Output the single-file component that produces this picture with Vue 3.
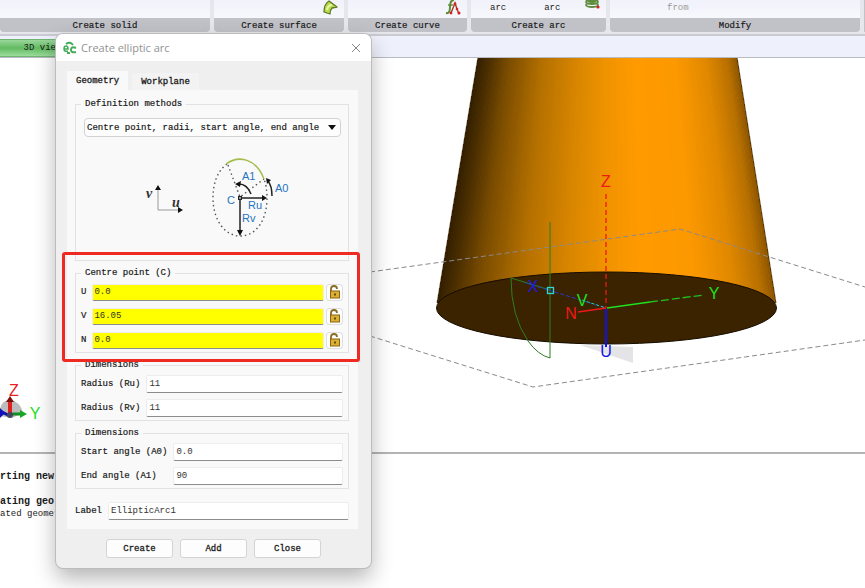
<template>
  <div class="page">
    <header class="ribbon">
      <section class="group">
        <div class="tools"></div>
        <h2>Create solid</h2>
      </section>
      <section class="group">
        <div class="tools end">
          <svg class="icon" width="16" height="18" viewBox="0 0 16 18">
            <path d="M2 12 Q2 4 7 1 L15 7 L10 8 Q8 10 8 14 Z" fill="#b9dc4a" stroke="#5d7a26" stroke-width="1.3" stroke-linejoin="round" />
            <path d="M5 10 Q6 5 10 5" fill="none" stroke="#e8f7a8" stroke-width="2" />
          </svg>
        </div>
        <h2>Create surface</h2>
      </section>
      <section class="group">
        <div class="tools end">
          <svg class="icon" width="16" height="18" viewBox="0 0 16 18">
            <path d="M1 13 Q5 14 5 7 Q5 0 9 0" fill="none" stroke="#5d8c3c" stroke-width="2" />
            <path d="M3 5 H8" stroke="#5d8c3c" stroke-width="1.4" />
            <path d="M6 13 L10 3 L12 9 L14 14" fill="none" stroke="#a83a2a" stroke-width="1.4" />
            <g fill="#d62020"><circle cx="6" cy="13" r="1.4" /><circle cx="10" cy="4" r="1.4" /><circle cx="12" cy="9" r="1.3" /><circle cx="14" cy="13" r="1.5" /></g>
          </svg>
        </div>
        <h2>Create curve</h2>
      </section>
      <section class="group">
        <div class="tools arcs">
          <span>arc</span>
          <span>arc</span>
          <svg class="icon" width="16" height="18" viewBox="0 0 16 18">
            <g fill="none" stroke="#5d8c3c" stroke-width="1.8">
              <path d="M2 0 Q8 3 14 0" />
              <ellipse cx="8" cy="2" rx="6" ry="2" />
              <ellipse cx="8" cy="5" rx="6" ry="2" />
            </g>
            <circle cx="14" cy="7" r="1.6" fill="#d62020" />
          </svg>
        </div>
        <h2>Create arc</h2>
      </section>
      <section class="group">
        <div class="tools faded"><span>from</span></div>
        <h2>Modify</h2>
      </section>
      <section class="group"></section>
    </header>

    <nav class="views">
      <button type="button" class="viewTab">3D view</button>
    </nav>

    <svg class="scene" viewBox="0 58 865 394">
      <!-- cone side, one quad per shade -->
      <g shape-rendering="crispEdges">
        <polygon v-for="s in strips" :key="s.points" :points="s.points" :fill="s.fill" />
      </g>
      <path d="M478 57 L437 303 M737 57 L776 303" stroke="#3a2400" stroke-width="1" fill="none" opacity=".7" />
      <path d="M580 345 L633 347 V363 Z" fill="#e4e4e6" />
      <ellipse cx="606.500" cy="308" rx="170" ry="36" fill="#3b2300" stroke="#150c00" />

      <g fill="none" stroke="#8a8a8a" stroke-dasharray="5 3">
        <path d="M370 272 L680 229 L865 287" />
        <path d="M370 336 L533 387 L865 340" />
      </g>

      <g fill="none" stroke-width="1">
        <path d="M550 222 V358 Q538 355 528 341 Q511 316 511 278" stroke="#2f7d22" />
        <path d="M511 278 L550 290" stroke="#2f7d22" />
        <path d="M526 283 L606 308" stroke="#1b3fd0" stroke-dasharray="4 2" />
        <path d="M582 300 L606 308" stroke="#35c8a0" stroke-dasharray="3 2" />
        <path d="M606 194 V308" stroke="#f01818" stroke-width="1.300" stroke-dasharray="5 3" />
        <path d="M578 312 L606 308" stroke="#f01818" stroke-width="1.300" />
        <path d="M607 308 L650 302" stroke="#20e020" stroke-width="1.300" />
        <path d="M650 302 L704 295" stroke="#20c020" stroke-dasharray="8 3" stroke-width="1.300" />
        <path d="M606 309 V347" stroke="#1010e8" stroke-width="2" />
        <rect x="547.500" y="287.500" width="6" height="6" stroke="#30d8d0" stroke-width="1.300" />
      </g>

      <g class="axis">
        <text x="606" y="187" fill="#f01818">Z</text>
        <text x="714" y="299" fill="#20e020">Y</text>
        <text x="533" y="292" fill="#1c1ce0">X</text>
        <text x="582" y="306" fill="#20e020">V</text>
        <text x="571" y="319" fill="#f01818">N</text>
        <text x="606" y="357" fill="#1010e8">U</text>
        <text x="14" y="396" fill="#e82020">Z</text>
        <text x="35" y="419" fill="#20e020">Y</text>
      </g>

      <!-- corner triad -->
      <path d="M0 409 Q2 400 10 400 Q20 401 23 413 L12 418 L0 416 Z" fill="#bcbcbc" />
      <path d="M10 416 L0 411" stroke="#1010b8" stroke-width="3" />
      <path d="M0 408 L5 413 L0 418 Z" fill="#1010b8" />
      <path d="M10 414 L22 414" stroke="#109020" stroke-width="3" />
      <path d="M20 410 L27 414 L20 418 Z" fill="#18a828" />
      <path d="M10 414 V400" stroke="#e02020" stroke-width="4" />
      <path d="M6 402 L10 396 L14 402 Z" fill="#7c1010" />
      <circle cx="10" cy="415" r="3" fill="#46465a" />
    </svg>

    <section class="console">
      <p class="strong">rting new</p>
      <p class="strong gap">ating geo</p>
      <p>ated geomet</p>
    </section>

    <form class="dialog" role="dialog" aria-labelledby="title" @submit.prevent>
      <div class="titleBar">
        <svg width="14" height="14" viewBox="0 0 14 14" fill="none" stroke="#45ab57" stroke-width="2">
          <path d="M3 3 Q7 0 10 4" />
          <path d="M1 8 H5 Q5 5 3 5 Q1 5 1 8 Q1 11 5 10" stroke-width="1.500" />
          <path d="M13 7 Q8 5 8 9 Q8 12 13 11" />
          <path d="M4 12 H7" />
        </svg>
        <h1 id="title">Create elliptic arc</h1>
        <button type="button" class="close" aria-label="Close window">
          <svg width="10" height="10" viewBox="0 0 10 10"><path d="M1 1 L9 9 M9 1 L1 9" stroke="#858585" /></svg>
        </button>
      </div>

      <div class="body">
        <div class="tabs">
          <button v-for="t in tabs" :key="t" type="button" :class="{ on: t === tab }" @click="tab = t">{{ t }}</button>
        </div>

        <div class="panel">
          <fieldset class="methods">
            <legend>Definition methods</legend>
            <div class="combo">
              <select v-model="method" aria-label="Definition methods">
                <option>Centre point, radii, start angle, end angle</option>
              </select>
            </div>
            <svg class="diagram" viewBox="81 137 260 123">
              <g stroke="#9a9a9a" fill="none"><path d="M158 189 V210 H179" /></g>
              <path d="M155 190 L158 185 L161 190 Z M178 207 L183 210 L178 213 Z" fill="#111" />
              <g class="uv">
                <text x="146" y="198">v</text>
                <text x="172" y="207">u</text>
              </g>
              <g fill="none">
                <path d="M227 164 C217 171 213 184 213 198 C213 220 225 236 240 236 C257 236 267 219 267 198 Q267 187 264 179" stroke="#555" stroke-width="1.400" stroke-dasharray="1.500 3" />
                <path d="M228 165 L240 197 L264 179" stroke="#555" stroke-width="1.400" stroke-dasharray="1.500 3" />
                <path d="M226 164 C240 154 257 160 264 179" stroke="#a3be4c" stroke-width="1.500" />
                <path d="M240 198 H263 M240 198 V231" stroke="#222" stroke-width="1.500" />
                <path d="M251 194 Q247 184 239 184" stroke="#222" stroke-width="1.500" />
                <path d="M272 196 Q272 186 268 181" stroke="#222" stroke-width="1.500" />
                <rect x="238.500" y="196.500" width="3" height="3" fill="#999" stroke="#222" />
              </g>
              <path d="M262 195 L267 198 L262 201 Z M237 230 L243 230 L240 236 Z M235 184 L241 181 L240 187 Z M266 178 L271 180 L267 184 Z" fill="#111" />
              <g class="names">
                <text x="242" y="180">A1</text>
                <text x="275" y="192">A0</text>
                <text x="227" y="204">C</text>
                <text x="248" y="209">Ru</text>
                <text x="242" y="222">Rv</text>
              </g>
            </svg>
          </fieldset>

          <fieldset class="rows marked">
            <legend>Centre point (C)</legend>
            <template v-for="c in centre" :key="c.name">
              <label :for="'c' + c.name">{{ c.name }}</label>
              <div class="locked">
                <input :id="'c' + c.name" v-model="c.value" type="text" class="yellow">
                <button type="button" class="lock" :aria-label="'Lock ' + c.name">
                  <svg width="12" height="14" viewBox="0 0 12 14">
                    <path d="M2 6 V4 Q2 1 5 1 Q8 1 8 4" fill="none" stroke="#8a6d24" stroke-width="1.800" />
                    <rect x="1.500" y="6" width="9" height="7" fill="#dcae33" stroke="#8a6516" />
                    <rect x="5" y="8.500" width="2" height="2" fill="#6e4a08" />
                  </svg>
                </button>
              </div>
            </template>
          </fieldset>

          <fieldset class="rows">
            <legend>Dimensions</legend>
            <template v-for="(r, i) in radii" :key="r.name">
              <label :for="'r' + i">{{ r.name }}</label>
              <input :id="'r' + i" v-model="r.value" type="text">
            </template>
          </fieldset>

          <fieldset class="rows">
            <legend>Dimensions</legend>
            <template v-for="(a, i) in angles" :key="a.name">
              <label :for="'a' + i">{{ a.name }}</label>
              <input :id="'a' + i" v-model="a.value" type="text">
            </template>
          </fieldset>

          <div class="rows labelRow">
            <label for="arcLabel">Label</label>
            <input id="arcLabel" v-model="arcLabel" type="text">
          </div>
        </div>

        <div class="actions">
          <button type="submit">Create</button>
          <button type="button">Add</button>
          <button type="button">Close</button>
        </div>
      </div>
    </form>
  </div>
</template>

<script setup>
import { ref } from 'vue'

const tabs = ['Geometry', 'Workplane']
const tab = ref('Geometry')
const method = ref('Centre point, radii, start angle, end angle')
const arcLabel = ref('EllipticArc1')
const centre = ref([
  { name: 'U', value: '0.0' },
  { name: 'V', value: '16.05' },
  { name: 'N', value: '0.0' },
])
const radii = ref([
  { name: 'Radius (Ru)', value: '11' },
  { name: 'Radius (Rv)', value: '11' },
])
const angles = ref([
  { name: 'Start angle (A0)', value: '0.0' },
  { name: 'End angle (A1)', value: '90' },
])

// shading across the cone: [position, r, g, b]
const shades = [
  [0, 50, 31, 0],
  [0.04, 72, 45, 0],
  [0.12, 122, 76, 0],
  [0.25, 180, 112, 0],
  [0.38, 215, 133, 0],
  [0.5, 240, 147, 0],
  [0.6, 255, 154, 0],
  [0.76, 253, 153, 0],
  [0.88, 224, 136, 0],
  [0.96, 184, 112, 0],
  [1, 140, 85, 0],
]

function shadeAt(t) {
  let i = 1
  while (shades[i][0] < t) i++
  const a = shades[i - 1]
  const b = shades[i]
  const k = (t - a[0]) / (b[0] - a[0])
  const rgb = [1, 2, 3].map(n => Math.round(a[n] + (b[n] - a[n]) * k))
  return `rgb(${rgb.join(',')})`
}

const count = 120
const strips = Array.from({ length: count }, (_, i) => {
  const t0 = i / count
  const top = 478 + 259 * t0
  const bottom = 437 + 339 * t0
  // every strip runs to the right edge, the next one paints over it
  return { points: `${top},57 737,57 776,303 ${bottom},303`, fill: shadeAt((i + 0.5) / count) }
})
</script>

<style>
body {
  margin: 0;
}
</style>

<style scoped>
.page {
  position: relative;
  display: flex;
  flex-direction: column;
  min-height: 100vh;
  overflow: hidden;
  background: #fff;
  color: #1a1a1a;
  font-family: "Liberation Mono", monospace;
  font-size: 9px;
  line-height: 12px;
}
h1, h2, p {
  margin: 0;
  font-size: inherit;
  font-weight: normal;
}
button, input, select {
  font: inherit;
  color: inherit;
  box-sizing: border-box;
}
.ribbon {
  display: grid;
  grid-template-columns: 210fr 130fr 119fr 135fr 250fr 1fr;
  gap: 4px;
  padding-bottom: 2px;
  background: #e6e7ec;
  border-bottom: 2px solid #c9cad2;
}
.group {
  display: flex;
  flex-direction: column;
  min-width: 0;
  overflow: hidden;
  background: #c1c2c8;
  border-radius: 0 0 4px 4px;
}
.group h2 {
  padding: 2px 0 0;
  text-align: center;
  -webkit-text-stroke: 0.2px;
}
.tools {
  display: flex;
  height: 18px;
  background: linear-gradient(#f1f2fa, #f7f8fd);
}
.end {
  justify-content: flex-end;
  padding-right: 6px;
}
.arcs {
  gap: 38px;
  padding: 0 5px 0 19px;
}
.arcs .icon {
  margin-left: auto;
}
.arcs span, .faded span {
  padding-top: 2px;
}
.arcs .icon {
  margin-left: -14px;
}
.faded {
  padding-left: 57px;
  color: #999;
}
.views {
  display: flex;
  padding-top: 3px;
  background: #eef1fb;
  border-bottom: 1px solid #b9bbc2;
}
.viewTab {
  width: 86px;
  height: 18px;
  padding: 0;
  border: 1px solid #71b471;
  border-left: 0;
  background: linear-gradient(#9ad79a, #62bb62 50%, #9bdc9b);
}
.scene {
  display: block;
  width: 100%;
}
.axis text {
  font-family: "Liberation Sans", sans-serif;
  font-size: 16px;
  text-anchor: middle;
}
.console {
  flex: 1;
  padding-top: 17px;
  border-top: 2px solid #b4b4b4;
}
.strong {
  font-size: 10px;
  font-weight: bold;
}
.gap {
  margin-top: 13px;
}

.dialog {
  position: absolute;
  top: 34px;
  left: 56px;
  width: 315px;
  border-radius: 7px;
  overflow: hidden;
  background: #efefef;
  box-shadow: 0 0 0 1px #bcbcbc, 0 10px 22px rgba(0, 0, 0, 0.3);
}
.titleBar {
  display: flex;
  align-items: center;
  height: 27px;
  padding: 0 8px 0 7px;
  background: #fff;
}
.titleBar h1 {
  flex: 1;
  margin-left: 4px;
  color: #929292;
  font-family: "Open Sans", sans-serif;
  font-size: 11px;
}
.close {
  display: flex;
  padding: 2px;
  border: 0;
  background: none;
}
.body {
  padding: 10px 13px 10px 11px;
}
.tabs {
  display: flex;
  align-items: flex-end;
  gap: 4px;
}
.tabs button {
  height: 17px;
  padding: 0 9px;
  border: 0;
  background: #f3f3f3;
  -webkit-text-stroke: 0.3px;
}
.tabs .on {
  height: 19px;
  background: #f9f9f9;
}
.panel {
  padding: 8px 9px 9px 8px;
  background: #f9f9f9;
}
fieldset {
  min-width: 0;
  margin: 0 0 6px;
  padding: 4px 5px 3px;
  border: 1px solid #e2e2e2;
}
legend {
  padding: 0 4px;
  -webkit-text-stroke: 0.2px;
}
.methods {
  padding: 8px 7px 0 5px;
}
.combo {
  position: relative;
  margin-left: 3px;
}
.combo::after {
  content: "";
  position: absolute;
  top: 7px;
  right: 5px;
  border: 4px solid transparent;
  border-top: 5px solid #111;
  border-bottom: 0;
  pointer-events: none;
}
.combo select {
  display: block;
  width: 100%;
  height: 19px;
  padding: 0 2px;
  appearance: none;
  border: 1px solid #d2d2d2;
  border-radius: 4px;
  background: #fdfdfd;
  -webkit-text-stroke: 0.2px;
}
.diagram {
  display: block;
  width: 100%;
}
.uv text {
  font-family: "Liberation Serif", serif;
  font-size: 14px;
  font-style: italic;
  font-weight: bold;
  fill: #333;
}
.names text {
  font-family: "Liberation Sans", sans-serif;
  font-size: 11px;
  fill: #2673bd;
}
.rows {
  display: grid;
  grid-template-columns: auto 1fr;
  gap: 6px;
  align-items: center;
}
.rows label {
  -webkit-text-stroke: 0.2px;
}
.rows input {
  width: 100%;
  min-width: 0;
  height: 18px;
  padding: 0 2px;
  border: 1px solid #ededed;
  border-bottom-color: #8c8c8c;
  border-radius: 2px;
  background: #fff;
  color: #333;
}
.rows .yellow {
  height: 17px;
  padding: 0 1px;
  background: #ff0;
}
.marked {
  position: relative;
}
/* red call-out round the centre point fields */
.marked::after {
  content: "";
  position: absolute;
  inset: -27px -12px -10px -14px;
  border: 3px solid #ee2a22;
  border-radius: 3px;
  pointer-events: none;
}
.locked {
  display: flex;
  align-items: center;
  gap: 2px;
  height: 18px;
}
.lock {
  display: flex;
  justify-content: center;
  align-items: center;
  flex: none;
  width: 17px;
  height: 17px;
  padding: 0;
  border: 1px solid #dedede;
  border-radius: 3px;
  background: #fdfdfd;
}
.labelRow {
  margin-top: 13px;
}
.actions {
  display: flex;
  justify-content: center;
  gap: 7px;
  padding: 10px 0 0 2px;
}
.actions button {
  width: 67px;
  height: 19px;
  padding: 0;
  border: 1px solid #d4d4d4;
  border-radius: 3px;
  background: #fdfdfd;
  -webkit-text-stroke: 0.3px;
}
</style>
